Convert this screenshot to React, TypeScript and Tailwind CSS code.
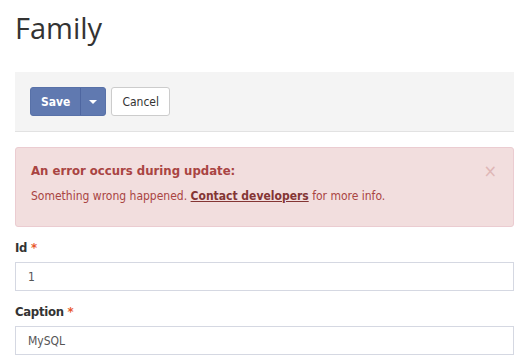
import { useState } from "react";

const body = { fontFamily: '"DejaVu Sans Condensed", "DejaVu Sans", Tahoma, sans-serif' };

function Field({ label, value }: { label: string; value: string }) {
  return (
    <div className="mt-[12px]">
      <label className="block text-[13px] font-bold text-[#333] leading-[18px] mb-[5px] tracking-[-0.3px]">
        {label} <span className="text-[#e8592c]">*</span>
      </label>
      <input
        defaultValue={value}
        className="w-full h-[29px] border border-[#d5d8e2] px-[12px] text-[12px] text-[#555] outline-none"
        style={body}
      />
    </div>
  );
}

export default function App() {
  const [alertOpen, setAlertOpen] = useState(true);

  return (
    <div className="w-[526px] h-[364px] bg-white pl-[15px] pr-[12px] overflow-hidden" style={body}>
      {/* Title */}
      <h1
        className="pt-[8px] text-[29px] leading-[40px] text-[#333]"
        style={{ fontFamily: '"Open Sans", "Noto Sans", sans-serif' }}
      >
        Family
      </h1>

      {/* Toolbar */}
      <div className="mt-[24px] h-[60px] bg-[#f4f4f4] border-b border-[#e2e2e2] px-[15px] flex items-center gap-[5px]">
        <div className="flex h-[29px] rounded-[3px] bg-[#6079b0] border border-[#5871a8] text-white">
          <button className="px-[10px] text-[12px] font-bold" style={body}>
            Save
          </button>
          <button className="w-[25px] flex items-center justify-center border-l border-[#4e66a0]">
            <svg width="8" height="4" viewBox="0 0 8 4">
              <path d="M0 0h8L4 4z" fill="#fff" />
            </svg>
          </button>
        </div>
        <button
          className="h-[29px] px-[10px] rounded-[3px] bg-white border border-[#cccccc] text-[12px] text-[#333]"
          style={body}
        >
          Cancel
        </button>
      </div>

      {/* Alert */}
      {alertOpen && (
        <div className="mt-[15px] h-[80px] rounded-[3px] bg-[#f2dede] border border-[#ebccd1] px-[15px] pt-[14px] relative text-[#a94442]">
          <div className="text-[13px] font-bold leading-[18px]">An error occurs during update:</div>
          <div className="mt-[7px] text-[12px] leading-[18px]">
            Something wrong happened.{" "}
            <a href="#" className="font-bold underline text-[#843534]">
              Contact developers
            </a>{" "}
            for more info.
          </div>
          <button
            onClick={() => setAlertOpen(false)}
            className="absolute right-[16px] top-[14px] text-[18px] leading-[18px] text-[#a94442] opacity-25"
          >
            ×
          </button>
        </div>
      )}

      {/* Fields */}
      <div className="mt-[8px]">
        <Field label="Id" value="1" />
        <Field label="Caption" value="MySQL" />
      </div>
    </div>
  );
}
